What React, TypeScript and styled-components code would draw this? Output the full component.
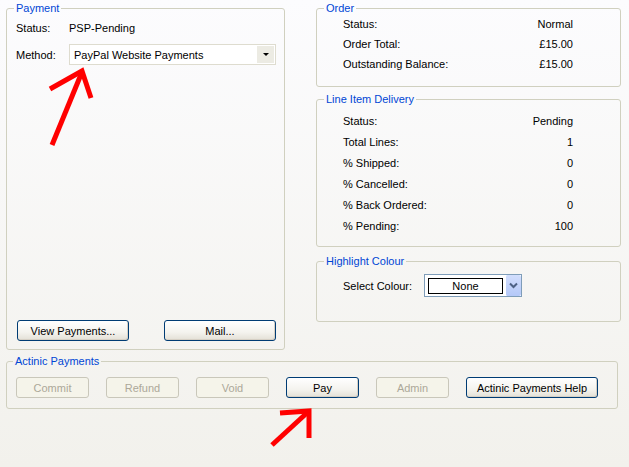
import React from "react";
import styled, { createGlobalStyle } from "styled-components";

const GlobalStyle = createGlobalStyle`
    html, body {
        margin: 0;
        padding: 0;
    }
    body {
        font-family: "Liberation Sans", Tahoma, Arial, sans-serif;
        font-size: 11px;
        color: #000;
    }
`;

const Page = styled.div`
    position: relative;
    width: 629px;
    height: 467px;
    box-sizing: border-box;
    padding: 2px 0 0 6px;
    background: linear-gradient(#fcfcfe, #f2f1ec);
    overflow: hidden;
`;

const Top = styled.div`
    display: grid;
    grid-template-columns: 279px 305px;
    column-gap: 31px;
    align-items: start;
`;

const RightColumn = styled.div`
    display: flex;
    flex-direction: column;
`;

const Group = styled.fieldset<{
    $height: number;
    $padT: number;
    $padL: number;
    $padR?: number;
    $legendX: number;
    $gapTop?: number;
}>`
    box-sizing: border-box;
    display: flex;
    flex-direction: column;
    min-width: 0;
    margin: ${({ $gapTop }) => $gapTop || 0}px 0 0 0;
    height: ${({ $height }) => $height}px;
    padding: ${({ $padT, $padL, $padR }) => `${$padT}px ${$padR || 0}px 0 ${$padL}px`};
    border: 1px solid #d0d0bf;
    border-radius: 3px;

    & > legend {
        margin-left: ${({ $legendX, $padL }) => $legendX - 3 - $padL}px;
    }
`;

const Legend = styled.legend`
    padding: 0 2px;
    line-height: 12px;
    color: #0046d5;
`;

const InfoRow = styled.div<{ $h: number }>`
    display: flex;
    justify-content: space-between;
    align-items: center;
    height: ${({ $h }) => $h}px;
`;

const FieldRow = styled.div<{ $h: number; $mt?: number }>`
    display: flex;
    align-items: center;
    height: ${({ $h }) => $h}px;
    margin-top: ${({ $mt }) => $mt || 0}px;
`;

const FieldLabel = styled.span<{ $w: number }>`
    width: ${({ $w }) => $w}px;
    flex: none;
`;

const Combo = styled.div`
    box-sizing: border-box;
    display: flex;
    align-items: center;
    width: 207px;
    height: 21px;
    padding: 1px 1px 1px 4px;
    background: #fff;
    border: 1px solid #dedccf;
`;

const ComboText = styled.span`
    flex: 1;
`;

const ComboButton = styled.span`
    display: flex;
    align-items: center;
    justify-content: center;
    width: 17px;
    height: 100%;
    background: #ecebe3;

    &::after {
        content: "";
        border-left: 3px solid transparent;
        border-right: 3px solid transparent;
        border-top: 3px solid #000;
    }
`;

const ColourSelect = styled.div`
    box-sizing: border-box;
    display: flex;
    align-items: center;
    width: 98px;
    height: 23px;
    padding: 0 0 0 3px;
    background: #fff;
    border: 1px solid #7f9db9;
`;

const ColourBox = styled.div`
    box-sizing: border-box;
    width: 75px;
    height: 16px;
    border: 1px solid #000;
    text-align: center;
    line-height: 14px;
`;

const ColourButton = styled.div`
    display: flex;
    align-items: center;
    justify-content: center;
    width: 15px;
    height: 21px;
    margin-left: auto;
    border-radius: 2px;
    background: linear-gradient(#d2defd, #b4c8f8);
    border-left: 1px solid #fff;
`;

const ButtonRow = styled.div<{ $gap: number; $mt?: number }>`
    display: flex;
    gap: ${({ $gap }) => $gap}px;
    margin-top: ${({ $mt }) => ($mt === undefined ? "auto" : `${$mt}px`)};
`;

const XpButton = styled.button<{ $w: number }>`
    box-sizing: border-box;
    width: ${({ $w }) => $w}px;
    height: 21px;
    padding: 0;
    font: inherit;
    color: #000;
    border: 1px solid #003c74;
    border-radius: 3px;
    background: linear-gradient(#ffffff 0%, #f4f3ee 60%, #e3e0d6 100%);
    box-shadow: inset -1px -1px 0 #d6d0c5;

    &:disabled {
        color: #aca899;
        border-color: #c9c7ba;
        background: #f5f4ea;
        box-shadow: none;
    }
`;

const ArrowLayer = styled.svg`
    position: absolute;
    left: 0;
    top: 0;
    pointer-events: none;
`;

const orderRows = [
    ["Status:", "Normal"],
    ["Order Total:", "£15.00"],
    ["Outstanding Balance:", "£15.00"],
];

const deliveryRows = [
    ["Status:", "Pending"],
    ["Total Lines:", "1"],
    ["% Shipped:", "0"],
    ["% Cancelled:", "0"],
    ["% Back Ordered:", "0"],
    ["% Pending:", "100"],
];

const actinicButtons: [string, number, boolean][] = [
    ["Commit", 73, true],
    ["Refund", 73, true],
    ["Void", 73, true],
    ["Pay", 73, false],
    ["Admin", 73, true],
    ["Actinic Payments Help", 132, false],
];

export default function App() {
    return (
        <>
            <GlobalStyle />
            <Page>
                <Top>
                    <Group $height={348} $padT={6} $padL={9} $legendX={10}>
                        <Legend>Payment</Legend>
                        <FieldRow $h={16}>
                            <FieldLabel $w={53}>Status:</FieldLabel>
                            <span>PSP-Pending</span>
                        </FieldRow>
                        <FieldRow $h={21} $mt={8}>
                            <FieldLabel $w={53}>Method:</FieldLabel>
                            <Combo>
                                <ComboText>PayPal Website Payments</ComboText>
                                <ComboButton />
                            </Combo>
                        </FieldRow>
                        <ButtonRow $gap={35} style={{ paddingBottom: 8, paddingLeft: 1 }}>
                            <XpButton $w={112}>View Payments...</XpButton>
                            <XpButton $w={112}>Mail...</XpButton>
                        </ButtonRow>
                    </Group>

                    <RightColumn>
                        <Group $height={85} $padT={0} $padL={26} $padR={47} $legendX={10}>
                            <Legend>Order</Legend>
                            {orderRows.map(([k, v]) => (
                                <InfoRow $h={20} key={k}>
                                    <span>{k}</span>
                                    <span>{v}</span>
                                </InfoRow>
                            ))}
                        </Group>
                        <Group $height={154} $gapTop={6} $padT={5} $padL={26} $padR={47} $legendX={10}>
                            <Legend>Line Item Delivery</Legend>
                            {deliveryRows.map(([k, v]) => (
                                <InfoRow $h={21} key={k}>
                                    <span>{k}</span>
                                    <span>{v}</span>
                                </InfoRow>
                            ))}
                        </Group>
                        <Group $height={67} $gapTop={8} $padT={7} $padL={26} $legendX={10}>
                            <Legend>Highlight Colour</Legend>
                            <FieldRow $h={23}>
                                <FieldLabel $w={81}>Select Colour:</FieldLabel>
                                <ColourSelect>
                                    <ColourBox>None</ColourBox>
                                    <ColourButton>
                                        <svg width="9" height="7" viewBox="0 0 9 7">
                                            <path d="M1 1.5 L4.5 5 L8 1.5" fill="none" stroke="#4d6185" strokeWidth="2" />
                                        </svg>
                                    </ColourButton>
                                </ColourSelect>
                            </FieldRow>
                        </Group>
                    </RightColumn>
                </Top>

                <Group $height={54} $gapTop={5} $padT={10} $padL={9} $legendX={9} style={{ width: 612 }}>
                    <Legend>Actinic Payments</Legend>
                    <ButtonRow $gap={17} $mt={0}>
                        {actinicButtons.map(([label, w, off]) => (
                            <XpButton $w={w} disabled={off} key={label}>
                                {label}
                            </XpButton>
                        ))}
                    </ButtonRow>
                </Group>

                <ArrowLayer width="629" height="467" viewBox="0 0 629 467">
                    <g stroke="#ff0000" strokeWidth="5" fill="none" strokeLinecap="butt">
                        <path d="M52 145 L82 72" />
                        <path d="M50 89 L82 71 L91 98" />
                        <path d="M272 445 L309 411" />
                        <path d="M280 413 L309 411 L309 438" />
                    </g>
                </ArrowLayer>
            </Page>
        </>
    );
}
